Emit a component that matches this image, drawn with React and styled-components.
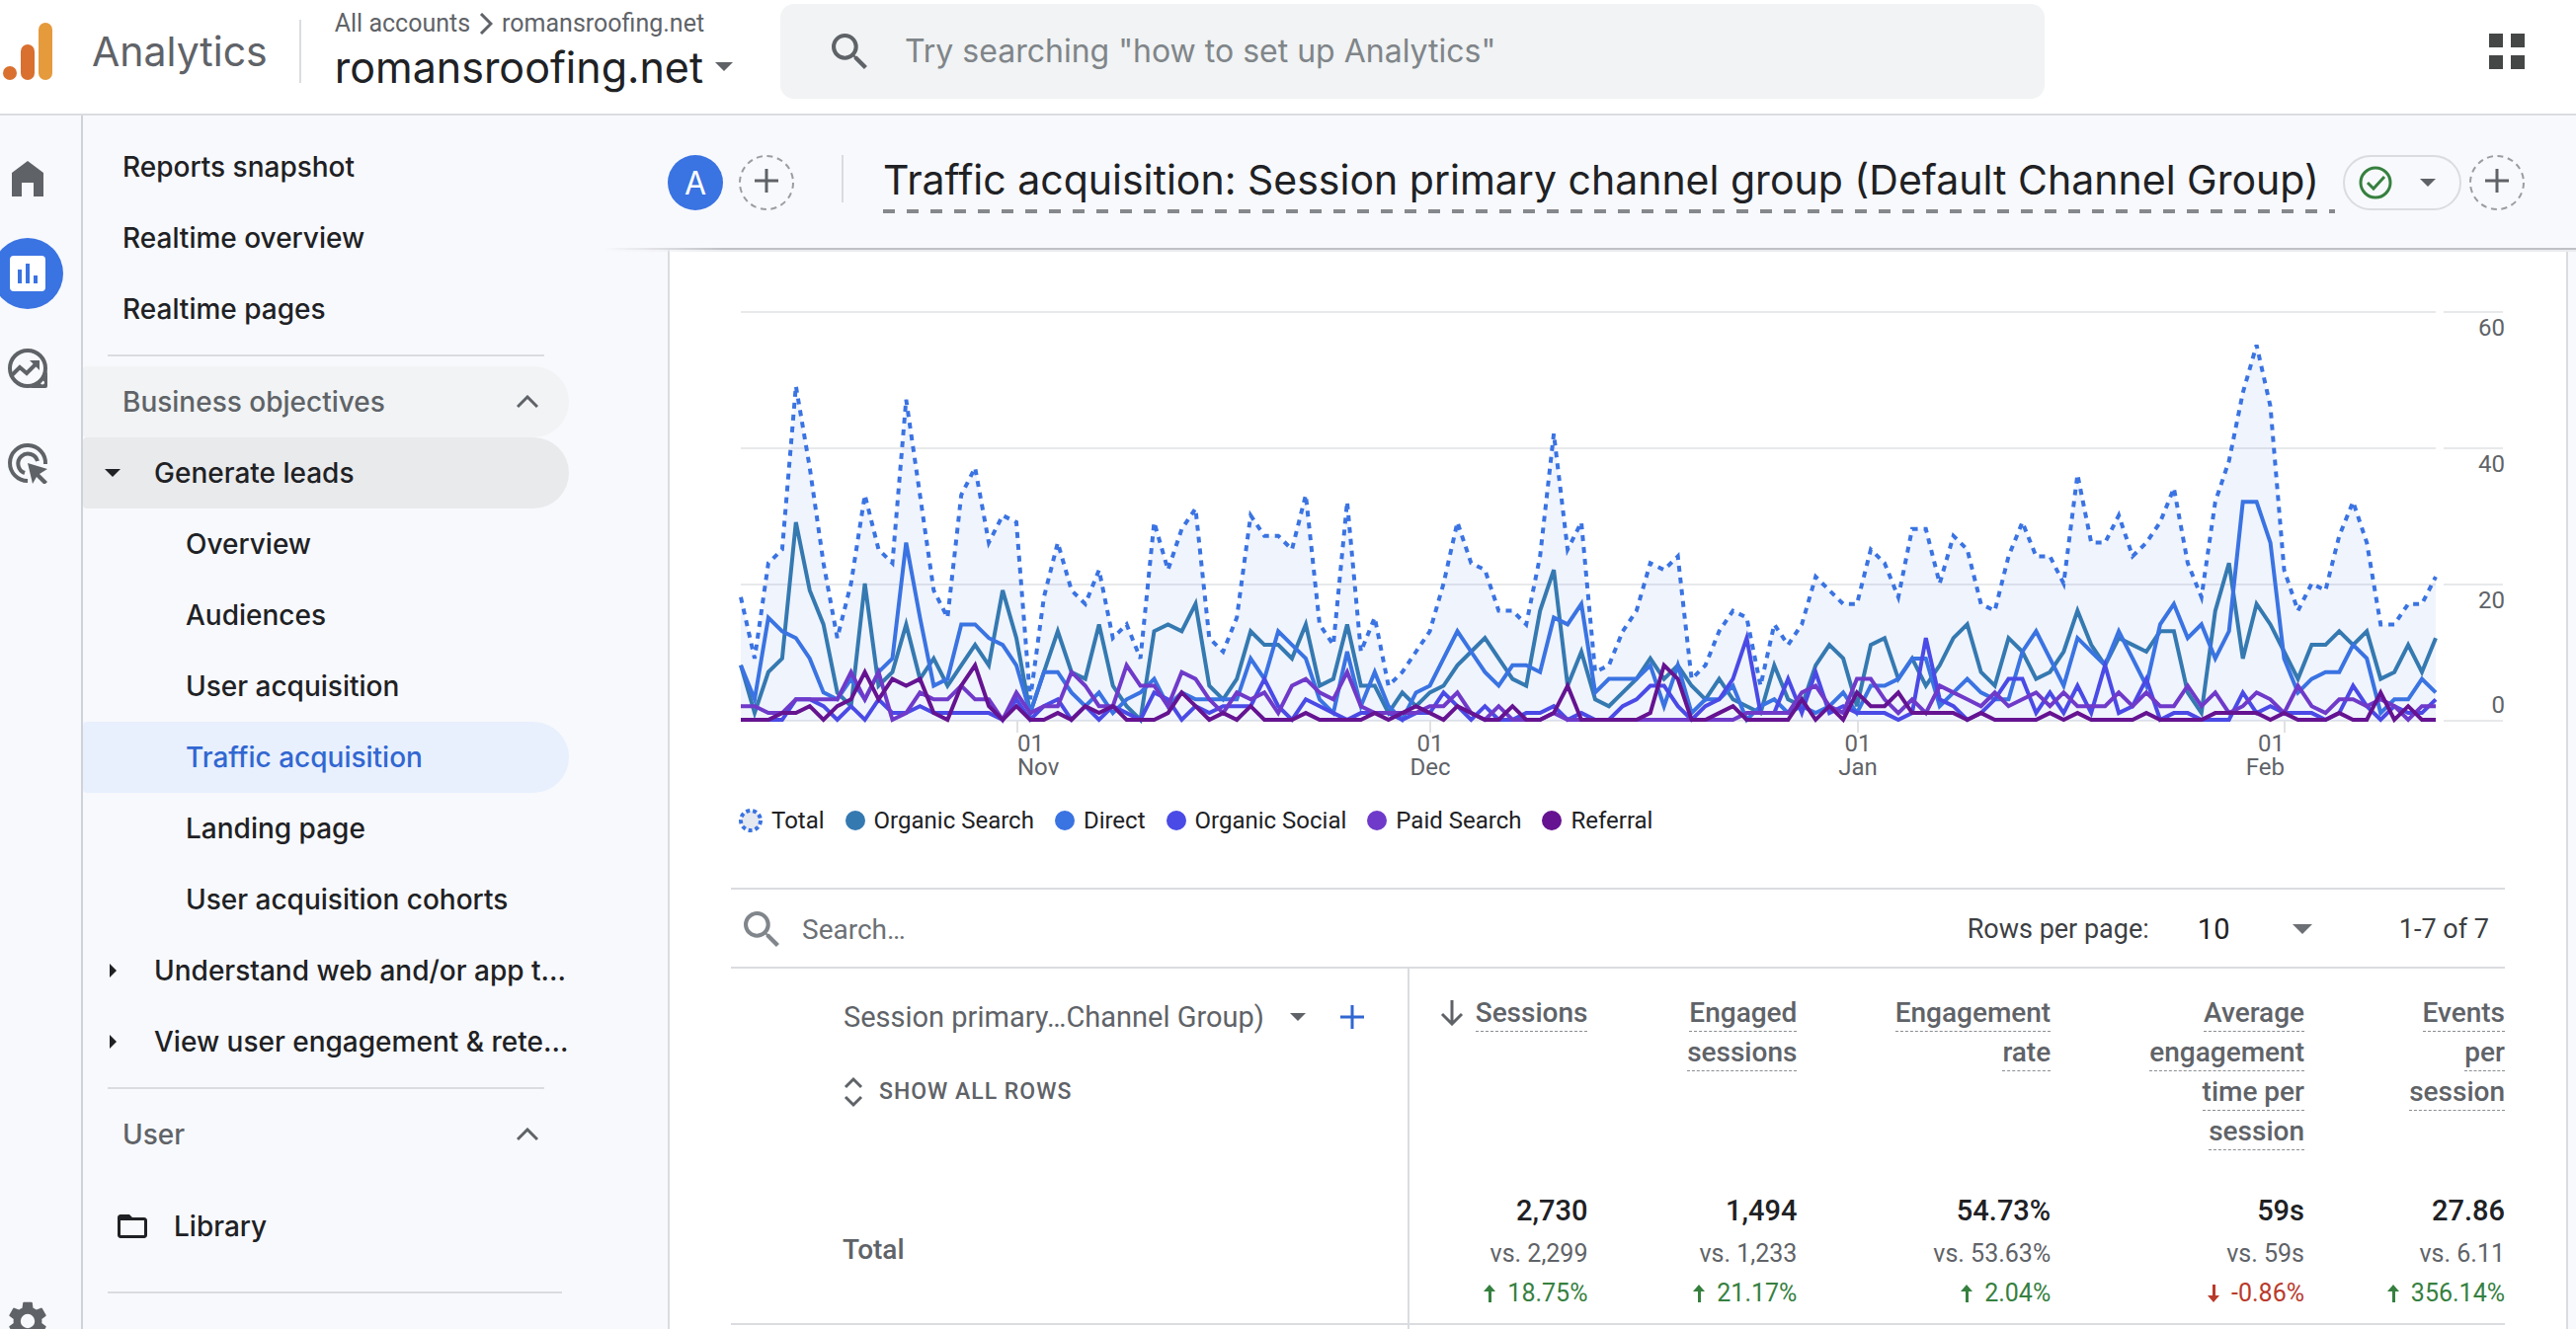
import { useId } from "react";
import styled, { createGlobalStyle } from "styled-components";

const text = "#202124";
const muted = "#5f6368";
const line = "#dadce0";
const surface = "#f8f9fc";
const blue = "#3a73e2";

const GlobalStyle = createGlobalStyle`
  * {
    box-sizing: border-box;
  }
  body {
    margin: 0;
    color: ${text};
    background: ${surface};
    font-family: Roboto, "Liberation Sans", sans-serif;
  }
  button, input, select {
    padding: 0;
    border: 0;
    background: none;
    color: inherit;
    font: inherit;
  }
  button {
    cursor: pointer;
  }
  a {
    color: inherit;
    text-decoration: none;
  }
  svg {
    display: block;
    flex: none;
  }
`;

const Page = styled.div`
  display: flex;
  flex-direction: column;
  height: 100vh;
  overflow: hidden;
`;

const TopBar = styled.header`
  flex: none;
  display: flex;
  align-items: center;
  height: 117px;
  padding: 0 52px 12px 3px;
  border-bottom: 2px solid ${line};
  background: #ffffff;
`;

const Brand = styled.a`
  margin-left: 38px;
  color: ${muted};
  font-family: Inter, sans-serif;
  font-size: 41px;
  line-height: 48px;
`;

const TopDivider = styled.span`
  width: 2px;
  height: 64px;
  margin: 0 34px 0 32px;
  background: ${line};
`;

const Account = styled.div`
  display: flex;
  flex-direction: column;
  flex: none;
`;

const Crumbs = styled.nav`
  display: flex;
  align-items: center;
  gap: 9px;
  color: ${muted};
  font-size: 25px;
  line-height: 32px;
`;

const Property = styled.button`
  display: flex;
  align-items: center;
  gap: 12px;
  font-family: Inter, sans-serif;
  font-size: 43px;
  line-height: 56px;
  svg {
    color: ${muted};
  }
`;

const SearchBox = styled.label`
  display: flex;
  align-items: center;
  flex: 0 1 1280px;
  gap: 38px;
  height: 96px;
  margin: 0 40px 0 48px;
  padding: 0 52px;
  border-radius: 14px;
  background: #f1f3f4;
  color: ${muted};
  input {
    flex: 1;
    min-width: 0;
    outline: none;
    font-family: Inter, sans-serif;
    font-size: 32px;
    line-height: 40px;
  }
  input::placeholder {
    color: #808589;
    opacity: 1;
  }
`;

const Apps = styled.button`
  margin-left: auto;
  color: #444746;
`;

const Body = styled.div`
  flex: 1;
  display: flex;
  min-height: 0;
`;

const Rail = styled.nav`
  flex: none;
  display: flex;
  flex-direction: column;
  gap: 24px;
  width: 84px;
  padding-top: 28px;
  border-right: 2px solid #cfd2d8;
`;

const RailItem = styled.a`
  display: flex;
  align-items: center;
  justify-content: center;
  flex: none;
  width: 72px;
  height: 72px;
  margin-left: -8px;
  border-radius: 50%;
  color: ${({ $active }) => ($active ? "#ffffff" : muted)};
  background: ${({ $active }) => ($active ? blue : "none")};
  &:last-child {
    margin-top: auto;
    margin-bottom: -28px;
  }
`;

const Side = styled.nav`
  flex: none;
  width: 592px;
  padding-top: 16px;
  font-family: Inter, sans-serif;
  font-size: 28px;
  font-weight: 500;
`;

const itemBackground = {
  group: "#f1f3f4",
  open: "#e9eaec",
  active: "#e8f0fe"
};

const SideItem = styled.a`
  display: flex;
  align-items: center;
  width: 492px;
  height: 72px;
  padding-left: ${({ $level = 0 }) => 40 + $level * 32}px;
  border-radius: 4px 36px 36px 4px;
  background: ${({ $state }) => itemBackground[$state] || "none"};
  color: ${({ $state, $muted }) =>
    $state === "active" ? "#3167d1" : $muted ? muted : text};
`;

const SideParent = styled(SideItem)`
  gap: 34px;
  padding-left: 22px;
  white-space: nowrap;
`;

const SideGroup = styled(SideItem)`
  justify-content: space-between;
  padding-right: 31px;
`;

const SideRule = styled.hr`
  width: ${({ $wide }) => ($wide ? 460 : 442)}px;
  height: 2px;
  margin: 10px 0 10px 25px;
  border: 0;
  background: ${line};
`;

const Library = styled(SideItem)`
  gap: 27px;
  margin: 21px 0 30px;
  padding-left: 35px;
`;

const Main = styled.main`
  flex: 1;
  display: flex;
  flex-direction: column;
  min-width: 0;
`;

const ReportBar = styled.div`
  position: relative;
  flex: none;
  display: flex;
  align-items: center;
  height: 136px;
  padding-right: 52px;
  &::after {
    position: absolute;
    content: "";
    right: 0;
    bottom: -2px;
    left: -64px;
    height: 4px;
    background: linear-gradient(#bfc1c6 50%, #ebecef 50%);
    mask-image: linear-gradient(to right, transparent, #000 120px);
  }
`;

const Avatar = styled.button`
  flex: none;
  width: 56px;
  height: 56px;
  border-radius: 50%;
  background: ${blue};
  color: #ffffff;
  font-family: Inter, sans-serif;
  font-size: 32px;
`;

const AddButton = styled.button`
  flex: none;
  margin-left: ${({ $gap }) => $gap}px;
  color: ${muted};
`;

const BarDivider = styled.span`
  flex: none;
  width: 2px;
  height: 48px;
  margin: 0 40px 8px 48px;
  background: ${line};
`;

const Title = styled.h1`
  flex: 1;
  min-width: 0;
  margin: 0;
  padding-bottom: 6px;
  overflow: hidden;
  font-family: Inter, sans-serif;
  font-size: 41px;
  font-weight: 400;
  line-height: 56px;
  white-space: nowrap;
  background: repeating-linear-gradient(
      to right,
      #85888c 0 12px,
      transparent 12px 24px
    )
    bottom / 100% 4px no-repeat;
`;

const Status = styled.button`
  flex: none;
  display: flex;
  align-items: center;
  justify-content: space-between;
  width: 120px;
  height: 56px;
  margin-left: 8px;
  padding: 0 24px 0 14px;
  border: 2px solid ${line};
  border-radius: 28px;
  color: ${muted};
`;

const Card = styled.section`
  flex: 1;
  min-height: 0;
  margin-right: 8px;
  padding: 0 62px;
  overflow: hidden;
  border: solid ${line};
  border-width: 0 2px;
  background: #ffffff;
`;

const ChartSvg = styled.svg`
  width: 100%;
  height: auto;
  font-size: 24px;
  fill: none;
  text {
    fill: ${muted};
  }
`;

const Legend = styled.ul`
  display: flex;
  gap: 21px;
  margin: 0;
  padding: 0 0 52px 8px;
  list-style: none;
  font-size: 24px;
  line-height: 32px;
`;

const LegendItem = styled.li`
  display: flex;
  align-items: center;
  gap: 9px;
`;

const Dot = styled.span`
  width: 20px;
  height: 20px;
  border-radius: 50%;
  background: ${({ $color }) => $color};
`;

const TableBar = styled.div`
  display: flex;
  align-items: center;
  height: 82px;
  padding: 2px 16px 0 13px;
  border: solid ${line};
  border-width: 2px 0;
  color: #3c4043;
  font-size: 27px;
`;

const TableSearch = styled.label`
  display: flex;
  align-items: center;
  flex: 1;
  gap: 23px;
  color: #80868b;
  font-size: 28px;
  input {
    width: 400px;
    outline: none;
  }
  input::placeholder {
    color: #6c7075;
    opacity: 1;
  }
`;

const SelectWrap = styled.span`
  display: grid;
  align-items: center;
  width: 116px;
  margin: 0 88px 0 49px;
  color: #6c7075;
  > * {
    grid-area: 1 / 1;
  }
  select {
    appearance: none;
    color: ${text};
    font-size: 29px;
  }
  svg {
    justify-self: end;
    pointer-events: none;
  }
`;

const DataTable = styled.table`
  width: 100%;
  border-collapse: collapse;
  table-layout: fixed;
  font-size: 28px;
  line-height: 40px;
`;

const Column = styled.col`
  width: ${({ $share }) => $share}%;
`;

const DimensionHead = styled.th`
  padding: 29px 0 0 114px;
  border-right: 2px solid ${line};
  color: ${muted};
  font-weight: 400;
  text-align: left;
  vertical-align: top;
`;

const DimensionRow = styled.div`
  display: flex;
  align-items: center;
  justify-content: space-between;
  padding-right: 44px;
`;

const Dimension = styled.button`
  display: flex;
  align-items: center;
  gap: 26px;
  font-size: 29px;
`;

const ShowAll = styled.button`
  display: flex;
  align-items: center;
  gap: 16px;
  margin-top: 36px;
  font-size: 23px;
  font-weight: 500;
  letter-spacing: 1px;
`;

const MetricHead = styled.th`
  padding: 25px 0 40px ${({ $inset = 20 }) => $inset}px;
  color: ${muted};
  font-weight: 500;
  text-align: right;
  vertical-align: top;
  white-space: ${({ $sorted }) => ($sorted ? "nowrap" : "normal")};
  svg {
    display: inline-block;
    margin-right: 12px;
    vertical-align: -4px;
  }
  span {
    padding-bottom: 2px;
    border-bottom: 1px dashed #8b8e92;
  }
`;

const TotalHead = styled.th`
  padding: 40px 0 0 113px;
  border-right: 2px solid ${line};
  border-bottom: 2px solid ${line};
  color: ${muted};
  font-weight: 500;
  text-align: left;
  vertical-align: top;
`;

const MetricCell = styled.td`
  padding: 0 0 10px;
  border-bottom: 2px solid ${line};
  font-size: 29px;
  font-weight: 500;
  text-align: right;
`;

const Previous = styled.div`
  margin-top: 4px;
  color: ${muted};
  font-size: 25px;
  font-weight: 400;
`;

const Change = styled.div`
  display: flex;
  align-items: center;
  justify-content: flex-end;
  gap: 12px;
  color: ${({ $down }) => ($down ? "#b93a2b" : "#36803f")};
  font-size: 25px;
  font-weight: 400;
`;

const NextDimension = styled.td`
  height: 80px;
  border-right: 2px solid ${line};
`;

const Logo = () => (
  <svg width="52" height="60" viewBox="0 0 52 60" aria-hidden="true">
    <circle cx="7" cy="52" r="7" fill="#d9702f" />
    <rect x="18" y="23" width="14" height="36" rx="7" fill="#d9702f" />
    <rect x="36" y="1" width="14" height="58" rx="7" fill="#e59a3c" />
  </svg>
);

const Magnifier = () => (
  <svg width="36" height="36" viewBox="3 3 17.5 17.5" fill="currentColor">
    <path d="M15.5 14h-.79l-.28-.27A6.47 6.47 0 0 0 16 9.5 6.5 6.5 0 1 0 9.5 16c1.61 0 3.09-.59 4.23-1.57l.27.28v.79l5 4.99L20.49 19l-4.99-5zm-6 0C7.01 14 5 11.99 5 9.5S7.01 5 9.5 5 14 7.01 14 9.5 11.99 14 9.5 14z" />
  </svg>
);

const Caret = ({ size = 18 }) => (
  <svg width={size} height={size / 2} viewBox="0 0 10 5" fill="currentColor">
    <path d="M0 0h10L5 5z" />
  </svg>
);

const CaretRight = () => (
  <svg width="16" height="14" viewBox="0 0 16 14" fill="currentColor">
    <path d="M5 0l7 7-7 7z" />
  </svg>
);

const ChevronUp = () => (
  <svg width="22" height="14" viewBox="0 0 22 14" fill="none" stroke={muted} strokeWidth="3">
    <path d="M1 12L11 2l10 10" />
  </svg>
);

const DashedPlus = () => (
  <svg width="56" height="56" viewBox="0 0 56 56" fill="none" stroke="currentColor">
    <circle cx="28" cy="28" r="27" stroke="#9a9da1" strokeWidth="2" strokeDasharray="6 4.6" />
    <path d="M28 14v24M16 26h24" strokeWidth="3" />
  </svg>
);

const ReportsIcon = () => (
  <svg width="36" height="36" viewBox="3 3 18 18" fill="currentColor">
    <path d="M19 3H5a2 2 0 0 0-2 2v14a2 2 0 0 0 2 2h14a2 2 0 0 0 2-2V5a2 2 0 0 0-2-2zM9 17H7v-7h2v7zm4 0h-2V7h2v10zm4 0h-2v-4h2v4z" />
  </svg>
);

const HomeIcon = () => (
  <svg width="32" height="36" viewBox="4 3 16 18" fill="currentColor">
    <path d="M4 21V9l8-6 8 6v12h-5v-7H9v7z" />
  </svg>
);

const ExploreIcon = () => (
  <svg width="40" height="40" viewBox="0 0 40 40" fill="none" stroke="currentColor" strokeWidth="4">
    <circle cx="20" cy="20" r="18" />
    <path
      d="M40 20v18a2 2 0 0 1-2 2H20c9 0 20-9 20-20zM35 32.500a2 2 0 1 0 0 4 2 2 0 0 0 0-4z"
      fill="currentColor"
      fillRule="evenodd"
      stroke="none"
    />
    <path d="M4 27l8-8 7 6 10-10" />
    <path d="M22 12h10v10l-4-4-4-4z" fill="currentColor" stroke="none" />
  </svg>
);

const AdsIcon = () => (
  <svg width="42" height="42" viewBox="0 0 42 42" fill="none" stroke="currentColor" strokeWidth="4">
    <path d="M39 22A18 18 0 1 0 21 39" />
    <path d="M31 19A10 10 0 1 0 18 31" />
    <path d="M21 21l20 6-8 5 8 8-3 3-8-8-4 7z" fill="currentColor" stroke="none" />
  </svg>
);

const GearIcon = () => (
  <svg width="40" height="40" viewBox="2 2 20 20" fill="currentColor">
    <path d="M19.14 12.94c.04-.3.06-.61.06-.94 0-.32-.02-.64-.07-.94l2.03-1.58a.49.49 0 0 0 .12-.61l-1.92-3.32a.49.49 0 0 0-.59-.22l-2.39.96c-.5-.38-1.03-.7-1.62-.94l-.36-2.54a.48.48 0 0 0-.48-.41h-3.84c-.24 0-.43.17-.47.41l-.36 2.54c-.59.24-1.13.57-1.62.94l-2.39-.96a.48.48 0 0 0-.59.22L2.74 8.87c-.12.21-.08.47.12.61l2.03 1.58c-.05.3-.09.63-.09.94s.02.64.07.94l-2.03 1.58a.49.49 0 0 0-.12.61l1.92 3.32c.12.22.37.29.59.22l2.39-.96c.5.38 1.03.7 1.62.94l.36 2.54c.05.24.24.41.48.41h3.84c.24 0 .44-.17.47-.41l.36-2.54c.59-.24 1.13-.56 1.62-.94l2.39.96c.22.08.47 0 .59-.22l1.92-3.32a.48.48 0 0 0-.12-.61l-2.01-1.58zM12 15.6a3.6 3.6 0 1 1 0-7.2 3.6 3.6 0 0 1 0 7.2z" />
  </svg>
);

const FolderIcon = () => (
  <svg width="30" height="24" viewBox="2 4 20 16" fill="currentColor">
    <path d="M20 6h-8l-2-2H4c-1.1 0-2 .9-2 2v12c0 1.1.9 2 2 2h16c1.1 0 2-.9 2-2V8c0-1.100-.9-2-2-2zm0 12H4V8h16v10z" />
  </svg>
);

const AppsIcon = () => (
  <svg width="36" height="36" viewBox="0 0 36 36" fill="currentColor">
    <path d="M0 0h14v14H0zM22 0h14v14H22zM0 22h14v14H0zM22 22h14v14H22z" />
  </svg>
);

const CheckIcon = () => (
  <svg width="34" height="34" viewBox="0 0 34 34" fill="none" stroke="#36803f" strokeWidth="3">
    <circle cx="17" cy="17" r="15" />
    <path d="M9 17l6 6 11-12" />
  </svg>
);

const ArrowDown = () => (
  <svg width="24" height="26" viewBox="0 0 24 26" fill="none" stroke="currentColor" strokeWidth="3">
    <path d="M12 0v24M2 14l10 10 10-10" />
  </svg>
);

const TrendArrow = ({ down }) => (
  <svg width="12" height="18" viewBox="0 0 12 18" fill="currentColor">
    <path
      d={
        down
          ? "M5 0h3v11h4l-6 7-6-7h5z"
          : "M5 18h3V7h4L6 0 0 7h5z"
      }
    />
  </svg>
);

const total = [
  18, 9, 23, 25, 49, 37, 23, 12, 20, 33, 25, 23, 47, 33, 19, 15, 33, 37, 26, 30,
  29, 3, 18, 26, 19, 17, 22, 12, 14, 9, 29, 22, 28, 31, 12, 10, 15, 30, 27, 27,
  25, 33, 14, 11, 32, 10, 15, 5, 7, 10, 13, 20, 29, 23, 22, 16, 16, 14, 24, 42,
  25, 29, 7, 8, 13, 16, 23, 22, 24, 6, 8, 13, 16, 15, 5, 14, 11, 14, 21, 19,
  17, 17, 25, 23, 18, 28, 28, 20, 27, 25, 17, 16, 24, 29, 24, 24, 20, 36, 26, 26,
  30, 24, 26, 29, 34, 23, 18, 32, 38, 48, 55, 46, 22, 16, 20, 19, 27, 32, 26, 14,
  14, 17, 17, 21
];

const series = [
  {
    name: "Organic Search",
    color: "#3579b1",
    values: [
      8, 1, 7, 9, 29, 19, 14, 4, 2, 20, 5, 7, 14, 6, 9, 5, 8, 11, 8, 19,
      12, 1, 7, 13, 7, 6, 14, 5, 2, 0, 13, 14, 13, 17, 5, 3, 6, 13, 11, 11,
      9, 14, 5, 6, 14, 5, 5, 1, 4, 2, 4, 5, 8, 10, 12, 9, 6, 5, 16, 22,
      5, 10, 3, 2, 4, 6, 9, 6, 8, 5, 3, 6, 3, 2, 1, 8, 3, 2, 8, 11,
      9, 2, 11, 12, 6, 9, 5, 8, 12, 14, 7, 5, 12, 10, 6, 7, 10, 16, 11, 8,
      12, 11, 10, 13, 13, 4, 1, 16, 23, 9, 17, 14, 10, 6, 11, 11, 13, 11, 13, 6,
      7, 11, 7, 12
    ]
  },
  {
    name: "Direct",
    color: blue,
    values: [
      8, 3, 15, 13, 12, 9, 4, 3, 6, 3, 7, 9, 26, 15, 5, 6, 14, 14, 12, 11,
      8, 1, 7, 7, 4, 2, 4, 1, 3, 4, 6, 2, 4, 3, 3, 3, 3, 9, 6, 13,
      11, 9, 3, 1, 10, 2, 7, 2, 0, 4, 5, 9, 13, 10, 7, 5, 8, 8, 7, 15,
      14, 17, 4, 6, 6, 6, 8, 2, 8, 1, 3, 3, 5, 0, 2, 3, 1, 2, 1, 2,
      4, 1, 5, 5, 6, 9, 9, 2, 4, 6, 4, 3, 3, 10, 13, 9, 5, 12, 10, 8,
      13, 9, 5, 14, 17, 12, 14, 9, 13, 32, 32, 26, 9, 4, 6, 7, 7, 11, 9, 1,
      3, 3, 6, 4
    ]
  },
  {
    name: "Organic Social",
    color: "#4a4ae6",
    values: [
      0, 0, 0, 0, 3, 3, 2, 0, 2, 0, 3, 1, 1, 2, 1, 1, 1, 1, 1, 0,
      3, 0, 2, 3, 0, 2, 0, 2, 1, 0, 4, 3, 0, 2, 1, 2, 2, 2, 6, 2,
      0, 3, 2, 1, 0, 1, 1, 1, 0, 1, 1, 4, 2, 0, 2, 0, 0, 1, 1, 2,
      0, 1, 0, 0, 2, 3, 5, 5, 2, 0, 2, 3, 6, 12, 1, 1, 6, 1, 7, 1,
      2, 1, 1, 1, 0, 1, 12, 3, 2, 0, 1, 3, 6, 6, 1, 4, 1, 5, 1, 8,
      1, 2, 6, 0, 1, 1, 0, 0, 0, 4, 1, 2, 1, 1, 1, 0, 1, 5, 2, 0,
      2, 1, 1, 3
    ]
  },
  {
    name: "Paid Search",
    color: "#6f3ac9",
    values: [
      2, 2, 1, 1, 3, 3, 3, 3, 7, 3, 7, 0, 1, 4, 3, 3, 5, 3, 3, 0,
      4, 1, 2, 2, 7, 5, 2, 2, 8, 5, 5, 2, 7, 6, 3, 1, 4, 3, 4, 1,
      5, 6, 4, 3, 7, 2, 1, 1, 1, 1, 2, 2, 4, 1, 0, 2, 0, 0, 0, 1,
      0, 0, 0, 0, 0, 0, 0, 0, 0, 0, 0, 0, 0, 1, 1, 1, 1, 4, 5, 2,
      1, 6, 6, 3, 1, 3, 1, 5, 4, 3, 2, 4, 2, 3, 4, 2, 4, 2, 2, 2,
      4, 2, 4, 2, 2, 5, 2, 4, 1, 2, 4, 3, 1, 5, 2, 1, 3, 3, 2, 3,
      2, 0, 2, 2
    ]
  },
  {
    name: "Referral",
    color: "#651391",
    values: [
      0, 0, 0, 1, 1, 2, 0, 2, 3, 7, 3, 6, 5, 6, 1, 0, 5, 8, 2, 0,
      2, 0, 0, 1, 0, 2, 1, 2, 0, 0, 0, 1, 4, 2, 0, 1, 0, 2, 0, 0,
      0, 1, 0, 0, 0, 0, 1, 0, 1, 2, 1, 0, 2, 1, 0, 0, 2, 0, 0, 1,
      5, 0, 0, 0, 0, 0, 1, 8, 6, 0, 0, 1, 2, 0, 0, 0, 0, 3, 0, 2,
      0, 4, 2, 2, 4, 1, 1, 1, 1, 0, 1, 0, 0, 0, 0, 1, 0, 1, 0, 0,
      0, 0, 1, 0, 0, 0, 0, 1, 1, 1, 1, 0, 1, 0, 0, 0, 1, 0, 0, 4,
      0, 2, 0, 0
    ]
  }
];

const months = [
  { name: "Nov", x: 290, anchor: "start" },
  { name: "Dec", x: 708, anchor: "middle" },
  { name: "Jan", x: 1141, anchor: "middle" },
  { name: "Feb", x: 1573, anchor: "end" }
];

const left = 10;
const right = 1726;
const base = 477;
const yOf = value => base - value * 6.9;
const toPoints = values =>
  values
    .map((v, i) => {
      const x = left + (i * (right - left)) / (values.length - 1);
      return `${x.toFixed(1)},${(yOf(v) - 1).toFixed(1)}`;
    })
    .join(" ");

const Chart = () => (
  <ChartSvg viewBox="0 0 1796 562" role="img" aria-label="Sessions over time by channel">
    {[0, 20, 40, 60].map(v => (
      <g key={v}>
        <path
          d={`M${left} ${yOf(v)}H${right}M1734 ${yOf(v)}h60`}
          stroke="#e8e9eb"
          strokeWidth="2"
        />
        <text x="1796" y={v ? yOf(v) + 24 : yOf(v) - 8} textAnchor="end">
          {v}
        </text>
      </g>
    ))}
    {months.map(m => (
      <g key={m.name} textAnchor={m.anchor}>
        <path d={`M${m.x} ${base}v12`} stroke="#e0e1e3" strokeWidth="2" />
        <text x={m.x} y={base + 31}>01</text>
        <text x={m.x} y={base + 55}>{m.name}</text>
      </g>
    ))}
    <polygon
      points={`${left},${base} ${toPoints(total)} ${right},${base}`}
      fill={blue}
      fillOpacity="0.08"
    />
    <polyline
      points={toPoints(total)}
      stroke={blue}
      strokeWidth="4"
      strokeDasharray="6 6"
    />
    {series.map(s => (
      <polyline
        key={s.name}
        points={toPoints(s.values)}
        stroke={s.color}
        strokeWidth="4"
      />
    ))}
  </ChartSvg>
);

const metrics = [
  { name: "Sessions", value: "2,730", previous: "2,299", change: "18.75%", sorted: true },
  { name: "Engaged sessions", value: "1,494", previous: "1,233", change: "21.17%" },
  { name: "Engagement rate", value: "54.73%", previous: "53.63%", change: "2.04%", inset: 90 },
  {
    name: "Average engagement time per session",
    value: "59s",
    previous: "59s",
    change: "-0.86%",
    down: true,
    inset: 90
  },
  { name: "Events per session", value: "27.86", previous: "6.11", change: "356.14%", inset: 90 }
];

const columnShares = [38.2, 10.1, 11.8, 14.3, 14.3, 11.3];

const Sidebar = () => (
  <Side aria-label="Reports">
    <SideItem href="#snapshot">Reports snapshot</SideItem>
    <SideItem href="#realtime">Realtime overview</SideItem>
    <SideItem href="#realtime-pages">Realtime pages</SideItem>
    <SideRule />
    <SideGroup as="button" $state="group" $muted>
      Business objectives
      <ChevronUp />
    </SideGroup>
    <SideParent as="button" $state="open">
      <Caret size={16} />
      Generate leads
    </SideParent>
    <SideItem href="#overview" $level={2}>Overview</SideItem>
    <SideItem href="#audiences" $level={2}>Audiences</SideItem>
    <SideItem href="#user" $level={2}>User acquisition</SideItem>
    <SideItem href="#traffic" $level={2} $state="active">Traffic acquisition</SideItem>
    <SideItem href="#landing" $level={2}>Landing page</SideItem>
    <SideItem href="#cohorts" $level={2}>User acquisition cohorts</SideItem>
    <SideParent href="#understand">
      <CaretRight />
      Understand web and/or app t...
    </SideParent>
    <SideParent href="#engagement">
      <CaretRight />
      View user engagement & rete...
    </SideParent>
    <SideRule />
    <SideGroup as="button" $muted>
      User
      <ChevronUp />
    </SideGroup>
    <Library href="#library">
      <FolderIcon />
      Library
    </Library>
    <SideRule $wide />
  </Side>
);

const ReportTable = () => {
  const rowsId = useId();

  return (
    <>
      <TableBar>
        <TableSearch>
          <Magnifier />
          <input type="text" placeholder="Search…" aria-label="Search table" />
        </TableSearch>
        <label htmlFor={rowsId}>Rows per page:</label>
        <SelectWrap>
          <select id={rowsId} defaultValue="10">
            <option>10</option>
            <option>25</option>
            <option>50</option>
          </select>
          <Caret size={20} />
        </SelectWrap>
        1-7 of 7
      </TableBar>
      <DataTable>
        <colgroup>
          {columnShares.map((share, i) => (
            <Column key={i} $share={share} />
          ))}
        </colgroup>
        <thead>
          <tr>
            <DimensionHead scope="col">
              <DimensionRow>
                <Dimension>
                  Session primary…Channel Group)
                  <Caret size={16} />
                </Dimension>
                <button aria-label="Add dimension">
                  <svg width="24" height="24" viewBox="0 0 24 24" stroke="#3167d1" strokeWidth="3">
                    <path d="M12 0v24M0 12h24" />
                  </svg>
                </button>
              </DimensionRow>
              <ShowAll>
                <svg width="20" height="32" viewBox="0 0 20 32" fill="none" stroke={muted} strokeWidth="3">
                  <path d="M2 11l8-8 8 8M2 21l8 8 8-8" />
                </svg>
                SHOW ALL ROWS
              </ShowAll>
            </DimensionHead>
            {metrics.map(m => (
              <MetricHead key={m.name} scope="col" $inset={m.inset} $sorted={m.sorted}>
                {m.sorted && <ArrowDown />}
                <span>{m.name}</span>
              </MetricHead>
            ))}
          </tr>
        </thead>
        <tbody>
          <tr>
            <TotalHead scope="row">Total</TotalHead>
            {metrics.map(m => (
              <MetricCell key={m.name}>
                {m.value}
                <Previous>vs. {m.previous}</Previous>
                <Change $down={m.down}>
                  <TrendArrow down={m.down} />
                  {m.change}
                </Change>
              </MetricCell>
            ))}
          </tr>
          <tr>
            <NextDimension />
          </tr>
        </tbody>
      </DataTable>
    </>
  );
};

const App = () => (
  <Page>
    <GlobalStyle />
    <TopBar>
      <Logo />
      <Brand href="#home">Analytics</Brand>
      <TopDivider />
      <Account>
        <Crumbs aria-label="Account">
          <a href="#accounts">All accounts</a>
          <svg width="14" height="22" viewBox="0 0 14 22" fill="none" stroke={muted} strokeWidth="3">
            <path d="M2 1l10 10L2 21" />
          </svg>
          <a href="#property">romansroofing.net</a>
        </Crumbs>
        <Property>
          romansroofing.net
          <Caret />
        </Property>
      </Account>
      <SearchBox>
        <Magnifier />
        <input
          type="search"
          aria-label="Search"
          placeholder={'Try searching "how to set up Analytics"'}
        />
      </SearchBox>
      <Apps aria-label="Apps">
        <AppsIcon />
      </Apps>
    </TopBar>
    <Body>
      <Rail aria-label="Main">
        <RailItem href="#home" aria-label="Home">
          <HomeIcon />
        </RailItem>
        <RailItem href="#reports" aria-label="Reports" $active>
          <ReportsIcon />
        </RailItem>
        <RailItem href="#explore" aria-label="Explore">
          <ExploreIcon />
        </RailItem>
        <RailItem href="#advertising" aria-label="Advertising">
          <AdsIcon />
        </RailItem>
        <RailItem href="#admin" aria-label="Admin">
          <GearIcon />
        </RailItem>
      </Rail>
      <Sidebar />
      <Main>
        <ReportBar>
          <Avatar>A</Avatar>
          <AddButton $gap={16} aria-label="Add comparison">
            <DashedPlus />
          </AddButton>
          <BarDivider />
          <Title>
            Traffic acquisition: Session primary channel group (Default Channel Group)
          </Title>
          <Status aria-label="Data quality">
            <CheckIcon />
            <Caret size={16} />
          </Status>
          <AddButton $gap={8} aria-label="Add metric">
            <DashedPlus />
          </AddButton>
        </ReportBar>
        <Card>
          <Chart />
          <Legend>
            <LegendItem>
              <svg width="24" height="24" viewBox="0 0 24 24">
                <circle
                  cx="12"
                  cy="12"
                  r="10"
                  fill="#e4e8f0"
                  stroke={blue}
                  strokeWidth="4"
                  strokeDasharray="4 3"
                />
              </svg>
              Total
            </LegendItem>
            {series.map(s => (
              <LegendItem key={s.name}>
                <Dot $color={s.color} />
                {s.name}
              </LegendItem>
            ))}
          </Legend>
          <ReportTable />
        </Card>
      </Main>
    </Body>
  </Page>
);

export default App;
